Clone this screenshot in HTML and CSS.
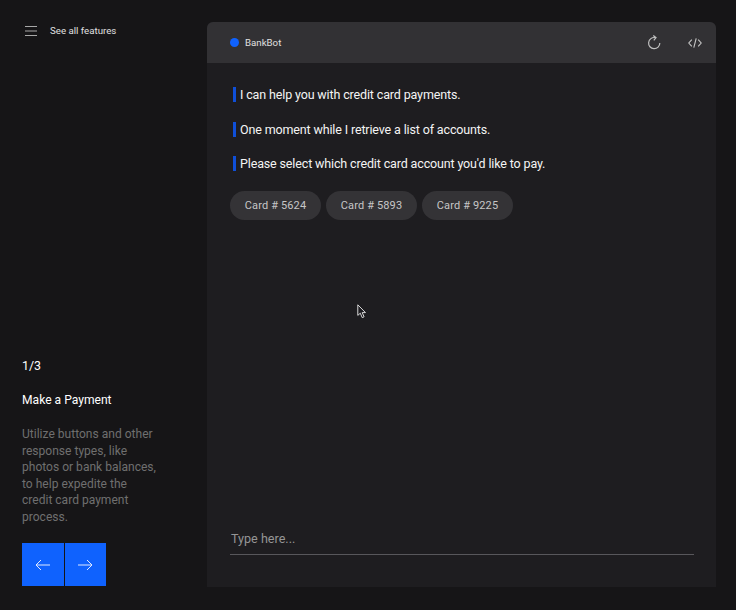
FILE: index.html
```html
<!DOCTYPE html>
<html lang="en">
<head>
<meta charset="utf-8">
<title>BankBot</title>
<link rel="stylesheet" href="styles.css">
</head>
<body>
<div class="page">
  <aside class="side">
    <div class="features">
      <svg class="menu" width="12" height="10" viewBox="0 0 12 10" aria-hidden="true"><path d="M0 .5h12M0 5h12M0 9.5h12" stroke="#a8a8a8" stroke-width="1" fill="none"/></svg>
      <span>See all features</span>
    </div>
    <div class="intro">
      <div class="count">1/3</div>
      <h1 class="title">Make a Payment</h1>
      <p class="desc">Utilize buttons and other<br>response types, like<br>photos or bank balances,<br>to help expedite the<br>credit card payment<br>process.</p>
      <div class="pager">
        <button class="nav" aria-label="Previous"><svg width="16" height="12" viewBox="0 0 16 12"><path d="M15 6H1M6 1 1 6l5 5" stroke="#dfe8ff" stroke-width="1" fill="none"/></svg></button>
        <button class="nav" aria-label="Next"><svg width="16" height="12" viewBox="0 0 16 12"><path d="M1 6h14M10 1l5 5-5 5" stroke="#dfe8ff" stroke-width="1" fill="none"/></svg></button>
      </div>
    </div>
  </aside>
  <main class="chat">
    <header class="head">
      <span class="dot"></span>
      <span class="name">BankBot</span>
      <svg class="reload" width="14" height="15" viewBox="0 0 14 15" aria-hidden="true"><path d="M8.2 2.6A5.6 5.6 0 1 0 12.8 8" stroke="#c0c0c0" stroke-width="1.2" fill="none"/><path d="M6.3.5 9 2.7 6.8 5.3" stroke="#c0c0c0" stroke-width="1.2" fill="none"/></svg>
      <svg class="code" width="14" height="10" viewBox="0 0 14 10" aria-hidden="true"><path d="M3.8 1.6.8 5l3 3.4M10.2 1.6l3 3.4-3 3.4M8.2.3 5.8 9.7" stroke="#c6c6c6" stroke-width="1.1" fill="none"/></svg>
    </header>
    <section class="log">
      <p class="msg">I can help you with credit card payments.</p>
      <p class="msg">One moment while I retrieve a list of accounts.</p>
      <p class="msg">Please select which credit card account you'd like to pay.</p>
      <div class="chips">
        <button class="chip">Card # 5624</button>
        <button class="chip">Card # 5893</button>
        <button class="chip">Card # 9225</button>
      </div>
    </section>
    <div class="entry">Type here...</div>
  </main>
</div>
<svg class="cursor" width="10" height="15" viewBox="0 0 10 15" aria-hidden="true"><path d="M.8.8v10.6l2.5-2.2 1.9 4.4 1.9-.8-1.9-4.2h3.3z" fill="#1d1c20" stroke="#d8d8d8" stroke-width="1"/></svg>
</body>
</html>
```
FILE: styles.css
```css
* { box-sizing: border-box; }
html, body { margin: 0; height: 100%; }
body {
  background: #161517;
  color: #f4f4f4;
  font-family: Roboto, "Noto Sans", sans-serif;
  overflow: hidden;
  position: relative;
}
.page {
  display: grid;
  grid-template-columns: 207px 509px;
  width: 736px;
  height: 610px;
  padding-top: 22px;
}
.side {
  display: flex;
  flex-direction: column;
  justify-content: space-between;
  height: 564px;
  padding-left: 22px;
}
.features {
  display: flex;
  align-items: center;
  gap: 13px;
  padding: 3px 0 0 3px;
  font-size: 9.7px;
  line-height: 12px;
  color: #e0e0e0;
}
.count { font-size: 12.4px; line-height: 16px; color: #fff; }
.title {
  margin: 18px 0 0;
  font-size: 12.1px;
  line-height: 16px;
  font-weight: 400;
  color: #fff;
}
.desc {
  margin: 18px 0 0;
  font-size: 12.05px;
  line-height: 16.5px;
  color: #6f6f6f;
}
.pager { display: flex; gap: 1px; margin-top: 18px; }
.nav {
  width: 41.5px;
  height: 43px;
  padding: 0;
  border: 0;
  background: #0f62fe;
  display: flex;
  align-items: center;
  justify-content: center;
}
.chat {
  display: flex;
  flex-direction: column;
  height: 565px;
  background: #1e1d20;
  border-radius: 6px 6px 0 0;
}
.head {
  display: flex;
  align-items: center;
  height: 41px;
  flex: none;
  padding: 0 14px 0 23px;
  background: #323134;
  border-radius: 6px 6px 0 0;
}
.dot {
  width: 9px;
  height: 9px;
  border-radius: 50%;
  background: #0f62fe;
}
.name {
  margin-left: 6px;
  font-size: 9.7px;
  color: #e0e0e0;
}
.reload { margin-left: auto; }
.code { margin-left: 27px; }
.log { flex: 1; padding: 24px 0 0 26px; }
.msg {
  margin: 0 0 19.5px;
  height: 15px;
  padding-left: 4px;
  border-left: 3px solid #0f4fd8;
  font-size: 12.5px;
  letter-spacing: -0.14px;
  line-height: 15px;
  color: #f4f4f4;
}
.chips { display: flex; gap: 5px; margin: 18.5px 0 0 -3px; }
.chip {
  width: 91px;
  height: 29.5px;
  padding: 0;
  border: 0;
  border-radius: 15px;
  background: #343336;
  color: #c6c6c6;
  font: 11px Roboto, "Noto Sans", sans-serif;
  letter-spacing: 0.15px;
}
.entry {
  margin: 0 22px 32px 23px;
  height: 31px;
  padding: 0 1px;
  border-bottom: 1px solid #58575b;
  font-size: 12.6px;
  line-height: 30px;
  color: #959595;
}
.cursor { position: absolute; left: 357px; top: 304px; }
```
